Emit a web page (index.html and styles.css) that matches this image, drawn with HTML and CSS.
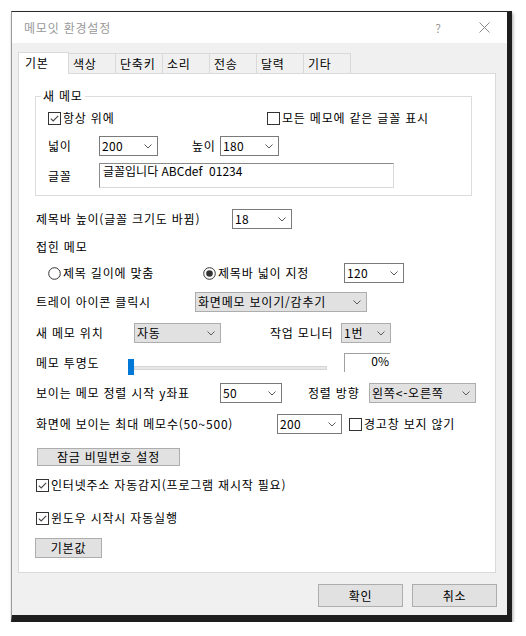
FILE: index.html
```html
<!DOCTYPE html>
<html lang="ko">
<head>
<meta charset="utf-8">
<title>메모잇 환경설정</title>
<link rel="stylesheet" href="styles.css">
</head>
<body>
<div class="window">
  <div class="titlebar">
    <span class="title">메모잇 환경설정</span>
    <span class="help">?</span>
    <svg class="close" width="11" height="11" viewBox="0 0 11 11"><path d="M0.5 0.5 L10.5 10.5 M10.5 0.5 L0.5 10.5" stroke="#8a8a8a" stroke-width="1" fill="none"/></svg>
  </div>
  <div class="body">
    <div class="tabs">
      <div class="tab sel">기본</div>
      <div class="tab first">색상</div>
      <div class="tab">단축키</div>
      <div class="tab">소리</div>
      <div class="tab">전송</div>
      <div class="tab">달력</div>
      <div class="tab">기타</div>
    </div>
    <div class="panel">
      <fieldset class="group">
        <legend>새 메모</legend>
        <div class="grow g1">
          <label class="chk w219"><svg class="box" width="13" height="13" viewBox="0 0 13 13"><rect x="0.5" y="0.5" width="12" height="12" fill="#fff" stroke="#333"/><path d="M2.8 6.6 L5.2 9 L10.2 3.8" stroke="#444" stroke-width="1.1" fill="none"/></svg><span>항상 위에</span></label>
          <label class="chk"><svg class="box" width="13" height="13" viewBox="0 0 13 13"><rect x="0.5" y="0.5" width="12" height="12" fill="#fff" stroke="#333"/></svg><span>모든 메모에 같은 글꼴 표시</span></label>
        </div>
        <div class="grow g2">
          <span class="lbl w51">넓이</span>
          <div class="select w59"><span>200</span><svg class="chev" width="8" height="5" viewBox="0 0 8 5"><polyline points="0.5,0.5 4,4 7.5,0.5" stroke="#5a5a5a" fill="none"/></svg></div>
          <span class="lbl w28 ml34">높이</span>
          <div class="select w59"><span>180</span><svg class="chev" width="8" height="5" viewBox="0 0 8 5"><polyline points="0.5,0.5 4,4 7.5,0.5" stroke="#5a5a5a" fill="none"/></svg></div>
        </div>
        <div class="grow g3">
          <span class="lbl w51">글꼴</span>
          <div class="fontbox">글꼴입니다 ABCdef&nbsp; 01234</div>
        </div>
      </fieldset>

      <div class="row r-title">
        <span class="lbl w196">제목바 높이(글꼴 크기도 바뀜)</span>
        <div class="select w60"><span>18</span><svg class="chev" width="8" height="5" viewBox="0 0 8 5"><polyline points="0.5,0.5 4,4 7.5,0.5" stroke="#5a5a5a" fill="none"/></svg></div>
      </div>

      <div class="row r-fold"><span class="lbl">접힌 메모</span></div>

      <div class="row r-radio">
        <label class="rad w155"><svg width="13" height="13" viewBox="0 0 13 13"><circle cx="6.5" cy="6.5" r="5.8" fill="#fff" stroke="#333"/></svg><span>제목 길이에 맞춤</span></label>
        <label class="rad w141"><svg width="13" height="13" viewBox="0 0 13 13"><circle cx="6.5" cy="6.5" r="5.8" fill="#fff" stroke="#333"/><circle cx="6.5" cy="6.5" r="3.3" fill="#333"/></svg><span>제목바 넓이 지정</span></label>
        <div class="select w60"><span>120</span><svg class="chev" width="8" height="5" viewBox="0 0 8 5"><polyline points="0.5,0.5 4,4 7.5,0.5" stroke="#5a5a5a" fill="none"/></svg></div>
      </div>

      <div class="row r-tray">
        <span class="lbl w159">트레이 아이콘 클릭시</span>
        <div class="select gray w172"><span>화면메모 보이기/감추기</span><svg class="chev" width="8" height="5" viewBox="0 0 8 5"><polyline points="0.5,0.5 4,4 7.5,0.5" stroke="#5a5a5a" fill="none"/></svg></div>
      </div>

      <div class="row r-pos">
        <span class="lbl w98">새 메모 위치</span>
        <div class="select gray w87"><span>자동</span><svg class="chev" width="8" height="5" viewBox="0 0 8 5"><polyline points="0.5,0.5 4,4 7.5,0.5" stroke="#5a5a5a" fill="none"/></svg></div>
        <span class="lbl w71 ml49">작업 모니터</span>
        <div class="select gray w50"><span>1번</span><svg class="chev" width="8" height="5" viewBox="0 0 8 5"><polyline points="0.5,0.5 4,4 7.5,0.5" stroke="#5a5a5a" fill="none"/></svg></div>
      </div>

      <div class="row r-alpha">
        <span class="lbl w92">메모 투명도</span>
        <div class="thumb"></div>
        <div class="track"></div>
        <div class="pct">0%</div>
      </div>

      <div class="row r-y">
        <span class="lbl w184">보이는 메모 정렬 시작 y좌표</span>
        <div class="select w62"><span>50</span><svg class="chev" width="8" height="5" viewBox="0 0 8 5"><polyline points="0.5,0.5 4,4 7.5,0.5" stroke="#5a5a5a" fill="none"/></svg></div>
        <span class="lbl w61 ml26">정렬 방향</span>
        <div class="select gray w107"><span>왼쪽&lt;-오른쪽</span><svg class="chev" width="8" height="5" viewBox="0 0 8 5"><polyline points="0.5,0.5 4,4 7.5,0.5" stroke="#5a5a5a" fill="none"/></svg></div>
      </div>

      <div class="row r-max">
        <span class="lbl w241">화면에 보이는 최대 메모수(50~500)</span>
        <div class="select w65"><span>200</span><svg class="chev" width="8" height="5" viewBox="0 0 8 5"><polyline points="0.5,0.5 4,4 7.5,0.5" stroke="#5a5a5a" fill="none"/></svg></div>
        <label class="chk ml7"><svg class="box" width="13" height="13" viewBox="0 0 13 13"><rect x="0.5" y="0.5" width="12" height="12" fill="#fff" stroke="#333"/></svg><span>경고창 보지 않기</span></label>
      </div>

      <div class="row r-lock">
        <div class="btn lock">잠금 비밀번호 설정</div>
      </div>

      <div class="row r-url">
        <label class="chk"><svg class="box" width="13" height="13" viewBox="0 0 13 13"><rect x="0.5" y="0.5" width="12" height="12" fill="#fff" stroke="#333"/><path d="M2.8 6.6 L5.2 9 L10.2 3.8" stroke="#444" stroke-width="1.1" fill="none"/></svg><span>인터넷주소 자동감지(프로그램 재시작 필요)</span></label>
      </div>

      <div class="row r-win">
        <label class="chk"><svg class="box" width="13" height="13" viewBox="0 0 13 13"><rect x="0.5" y="0.5" width="12" height="12" fill="#fff" stroke="#333"/><path d="M2.8 6.6 L5.2 9 L10.2 3.8" stroke="#444" stroke-width="1.1" fill="none"/></svg><span>윈도우 시작시 자동실행</span></label>
      </div>

      <div class="row r-def">
        <div class="btn def">기본값</div>
      </div>
    </div>
    <div class="actions">
      <div class="btn act">확인</div>
      <div class="btn act">취소</div>
    </div>
  </div>
</div>
</body>
</html>
```

FILE: styles.css
```css
* { box-sizing: border-box; }
html, body { margin: 0; padding: 0; background: #fff; }
body {
  font-family: "Noto Sans CJK KR", "Noto Sans", sans-serif;
  font-size: 12px;
  line-height: 14px;
  letter-spacing: 0.8px;
  color: #000;
}

.window {
  margin: 11px 0 0 11px;
  width: 501px;
  height: 611px;
  border-top: 1px solid #2a2a2a;
  border-left: 1px solid #9a9a9a;
  border-right: 5px solid #1e1e1e;
  border-bottom: 7px solid #1e1e1e;
  box-shadow: 1px 2px 3px rgba(0, 0, 0, 0.35);
  display: flex;
  flex-direction: column;
}

.titlebar {
  height: 31px;
  background: #fff;
  display: flex;
  align-items: center;
  padding-left: 12px;
}
.title { color: #999; }
.help { margin-left: auto; width: 8px; text-align: center; color: #999; letter-spacing: 0; }
.close { margin-left: 37px; margin-right: 17px; }

.body {
  flex: 1;
  background: #f0f0f0;
  padding: 9px 0 0 6px;
}

.tabs {
  display: flex;
  align-items: flex-end;
  height: 21px;
}
.tab {
  width: 47px;
  height: 20px;
  border-top: 1px solid #d9d9d9;
  border-right: 1px solid #d9d9d9;
  background: #f0f0f0;
  padding-left: 4px;
  line-height: 19px;
  white-space: nowrap;
}
.tab.first { border-left: none; }
.tab.sel {
  width: 51px;
  height: 22px;
  margin-bottom: -1px;
  border-left: 1px solid #d9d9d9;
  background: #fff;
  padding-left: 6px;
  line-height: 19px;
  position: relative;
  z-index: 1;
}

.panel {
  width: 478px;
  height: 500px;
  background: #fff;
  border: 1px solid #d9d9d9;
  padding-left: 17px;
}

.group {
  margin: 15px 0 0 -1px;
  width: 437px;
  padding: 0 0 7px 12px;
  border: 1px solid #dcdcdc;
  min-width: 0;
}
.group legend {
  padding: 0 2px;
  margin-left: -7px;
  height: 14px;
  line-height: 14px;
}
.grow { display: flex; align-items: center; }
.g1 { margin-top: 8px; height: 14px; }
.g2 { margin-top: 11px; height: 20px; }
.g3 { margin-top: 7px; height: 25px; }

.row { display: flex; align-items: center; }

.lbl { display: block; white-space: nowrap; flex: none; }
.w28 { width: 28px; }
.w51 { width: 51px; }
.w61 { width: 61px; }
.w71 { width: 71px; }
.w92 { width: 92px; }
.w98 { width: 98px; }
.w159 { width: 159px; }
.w184 { width: 184px; }
.w196 { width: 196px; }
.w241 { width: 241px; }
.ml7 { margin-left: 7px; }
.ml26 { margin-left: 26px; }
.ml34 { margin-left: 34px; }
.ml49 { margin-left: 49px; }

.chk, .rad { display: flex; align-items: center; white-space: nowrap; flex: none; }
.chk svg, .rad svg { flex: none; margin-right: 2px; }
.w219 { width: 219px; }
.w155 { width: 155px; }
.w141 { width: 141px; }

.select {
  flex: none;
  height: 20px;
  border: 1px solid #7a7a7a;
  background: #fff;
  display: flex;
  align-items: center;
  justify-content: space-between;
  padding: 0 5px 1px 2px;
  white-space: nowrap;
  letter-spacing: 0.3px;
}
.select.gray { background: #e1e1e1; border-color: #adadad; }
.select.gray span { letter-spacing: 0.8px; }
.select .chev { flex: none; margin-top: 1px; }
.w50 { width: 50px; }
.w59 { width: 59px; }
.w60 { width: 60px; }
.w62 { width: 62px; }
.w65 { width: 65px; }
.w87 { width: 87px; }
.w107 { width: 107px; }
.w172 { width: 172px; }

.fontbox {
  width: 295px;
  height: 25px;
  border-top: 1px solid #8a8a8a;
  border-left: 1px solid #8a8a8a;
  border-right: 1px solid #dadada;
  border-bottom: 1px solid #dadada;
  padding: 0 3px;
  line-height: 14px;
  white-space: nowrap;
  letter-spacing: 0;
}

.r-title { margin-top: 13px; height: 20px; }
.r-fold { margin-top: 11px; height: 14px; }
.r-radio { margin-top: 9px; height: 20px; padding-left: 12px; }
.r-tray { margin-top: 9px; height: 20px; }
.r-pos { margin-top: 11px; height: 20px; }
.r-alpha { margin-top: 10px; height: 20px; }
.r-y { margin-top: 10px; height: 20px; }
.r-max { margin-top: 11px; height: 20px; }
.r-lock { margin-top: 14px; height: 18px; }
.r-url { margin-top: 12px; height: 14px; }
.r-win { margin-top: 19px; height: 14px; }
.r-def { margin-top: 13px; height: 20px; }

.thumb {
  flex: none;
  width: 6px;
  height: 16px;
  background: #0078d7;
  margin-top: 8px;
}
.track {
  flex: none;
  width: 193px;
  height: 4px;
  background: #e7e7e7;
  border: 1px solid #d6d6d6;
  margin-top: 10px;
}
.pct {
  flex: none;
  width: 46px;
  height: 19px;
  margin-left: 17px;
  border-top: 1px solid #a0a0a0;
  border-left: 1px solid #a0a0a0;
  text-align: right;
  padding-right: 1px;
  line-height: 14px;
  letter-spacing: 0;
  align-self: flex-start;
}

.btn {
  flex: none;
  background: #e1e1e1;
  border: 1px solid #adadad;
  display: flex;
  align-items: center;
  justify-content: center;
  white-space: nowrap;
}
.lock { width: 143px; height: 18px; margin-left: 1px; }
.def { width: 67px; height: 20px; margin-left: -1px; }

.actions {
  width: 479px;
  margin-top: 11px;
  display: flex;
  justify-content: flex-end;
  gap: 9px;
}
.act { width: 85px; height: 23px; }
```
